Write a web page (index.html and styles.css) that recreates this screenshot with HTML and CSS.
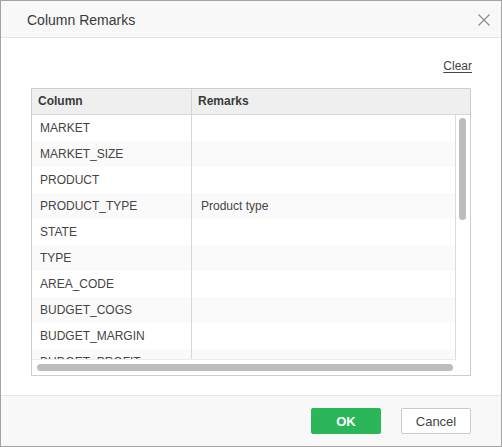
FILE: index.html
```html
<!DOCTYPE html>
<html>
<head>
<meta charset="utf-8">
<link rel="stylesheet" href="styles.css">
</head>
<body>
<div class="dialog">
  <div class="dlg-head">
    <span class="dlg-title">Column Remarks</span>
    <span class="dlg-close">
      <svg width="12" height="12" viewBox="0 0 12 12"><path d="M0.5 0.5L11.5 11.5M11.5 0.5L0.5 11.5" stroke="#8c8c8c" stroke-width="1.1" fill="none"/></svg>
    </span>
  </div>
  <div class="dlg-body">
    <div class="clear-row"><span class="clear">Clear</span></div>
    <div class="grid">
      <div class="grid-head">
        <div class="hc hc-col">Column</div>
        <div class="hc hc-rem">Remarks</div>
      </div>
      <div class="grid-main">
        <div class="rows">
          <div class="row"><div class="c1">MARKET</div><div class="c2"></div></div>
          <div class="row alt"><div class="c1">MARKET_SIZE</div><div class="c2"></div></div>
          <div class="row"><div class="c1">PRODUCT</div><div class="c2"></div></div>
          <div class="row alt"><div class="c1">PRODUCT_TYPE</div><div class="c2">Product type</div></div>
          <div class="row"><div class="c1">STATE</div><div class="c2"></div></div>
          <div class="row alt"><div class="c1">TYPE</div><div class="c2"></div></div>
          <div class="row"><div class="c1">AREA_CODE</div><div class="c2"></div></div>
          <div class="row alt"><div class="c1">BUDGET_COGS</div><div class="c2"></div></div>
          <div class="row"><div class="c1">BUDGET_MARGIN</div><div class="c2"></div></div>
          <div class="row alt"><div class="c1">BUDGET_PROFIT</div><div class="c2"></div></div>
        </div>
        <div class="vscroll"><div class="vthumb"></div></div>
        <div class="hscroll"><div class="hthumb"></div></div>
        <div class="corner"></div>
      </div>
    </div>
  </div>
  <div class="dlg-foot">
    <button class="btn btn-ok">OK</button>
    <button class="btn btn-cancel">Cancel</button>
  </div>
</div>
</body>
</html>
```
FILE: styles.css
```css
* { box-sizing: border-box; }
html, body { margin: 0; padding: 0; background: #fff; }
body { font-family: "Liberation Sans", Arial, sans-serif; }

.dialog {
  width: 502px;
  height: 447px;
  border: 1px solid #a4a4a4;
  display: flex;
  flex-direction: column;
  background: #fff;
}

.dlg-head {
  height: 37px;
  flex: none;
  background: #f8f8f8;
  border-bottom: 1px solid #e6e6e6;
  display: flex;
  align-items: center;
  justify-content: space-between;
  padding: 2px 11px 0 26px;
}
.dlg-title { font-size: 14px; color: #3a3a3a; }
.dlg-close { display: flex; width: 12px; height: 12px; margin-top: -1px; }

.dlg-body {
  flex: 1;
  display: flex;
  flex-direction: column;
  padding: 0 30px 0 30px;
}
.clear-row {
  display: flex;
  justify-content: flex-end;
  padding-top: 20px;
  height: 50px;
}
.clear {
  font-size: 12px;
  color: #444;
  text-decoration: underline;
  text-underline-offset: 2px;
  line-height: 16px;
  margin-right: -1px;
}

.grid {
  width: 440px;
  height: 288px;
  border: 1px solid #cdcdcd;
  display: flex;
  flex-direction: column;
}
.grid-head {
  height: 26px;
  flex: none;
  background: #efefef;
  border-bottom: 1px solid #d6d6d6;
  display: flex;
}
.hc {
  font-size: 12px;
  font-weight: bold;
  color: #3a3a3a;
  line-height: 25px;
  padding-left: 6px;
}
.hc-col { width: 160px; border-right: 1px solid #d6d6d6; }
.hc-rem { flex: 1; }

.grid-main {
  flex: 1;
  display: grid;
  grid-template-columns: 424px 14px;
  grid-template-rows: 245px 14px;
}
.rows {
  overflow: hidden;
  border-right: 1px solid #dcdcdc;
  border-bottom: 1px solid #ececec;
}
.row {
  height: 26px;
  display: flex;
  font-size: 12px;
  color: #454545;
  line-height: 26px;
}
.row.alt { background: #fafafa; }
.c1 { width: 160px; padding-left: 8px; border-right: 1px solid #d6d6d6; }
.c2 { flex: 1; padding-left: 9px; }

.vscroll { padding: 3px 0 0 3px; }
.vthumb { width: 7px; height: 102px; background: #bdbdbd; border-radius: 4px; }
.hscroll { padding: 4px 0 0 5px; }
.hthumb { width: 416px; height: 7px; background: #bdbdbd; border-radius: 4px; }
.corner { background: #fff; }

.dlg-foot {
  height: 51px;
  flex: none;
  background: #f8f8f8;
  border-top: 1px solid #e6e6e6;
  display: flex;
  justify-content: flex-end;
  align-items: flex-start;
  gap: 20px;
  padding: 12px 30px 0 0;
}
.btn {
  width: 70px;
  height: 26px;
  font-family: "Liberation Sans", Arial, sans-serif;
  font-size: 13px;
  border-radius: 2px;
  padding: 0;
  margin: 0;
  cursor: pointer;
}
.btn-ok { background: #2bb65a; color: #fff; border: 1px solid #2bb65a; font-weight: bold; }
.btn-cancel { background: #fff; color: #444; border: 1px solid #cacaca; }
```
